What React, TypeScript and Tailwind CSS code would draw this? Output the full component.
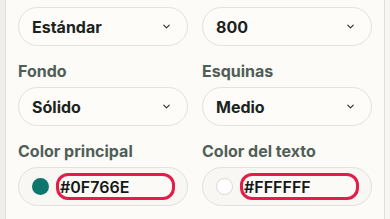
import { ChevronDown } from 'lucide-react';

type SelectProps = { value: string };

function PillSelect({ value }: SelectProps) {
  return (
    <div className="h-[39px] rounded-full border border-[#e4e1d9] bg-[#fdfcf9] pl-[13px] pr-[15px] flex items-center justify-between">
      <span className="text-[16px] font-bold text-[#1b2320]">{value}</span>
      <ChevronDown className="w-[11px] h-[11px] text-[#2a302d]" strokeWidth={2.5} />
    </div>
  );
}

function ColorField({ swatch, value, light }: { swatch: string; value: string; light?: boolean }) {
  return (
    <div className="h-[39px] rounded-full border border-[#e4e1d9] bg-[#f8f7f3] pl-[13px] pr-[10px] flex items-center gap-[7px]">
      <span
        className={`w-[17px] h-[17px] rounded-full shrink-0 ${light ? 'border border-[#d9d7d1]' : ''}`}
        style={{ backgroundColor: swatch }}
      />
      <div className="w-[119px] h-[27px] rounded-[12px] border-[3px] border-[#e11d48] bg-[#fbfaf7] flex items-center pl-[1px]">
        <span className="text-[16px] font-semibold text-[#141816] leading-none">{value}</span>
      </div>
    </div>
  );
}

function Field({ label, children }: { label: string; children: React.ReactNode }) {
  return (
    <div>
      <div className="text-[16px] leading-[22px] font-bold text-[#505e58] mb-[5px]">{label}</div>
      {children}
    </div>
  );
}

export default function App() {
  return (
    <div className="w-[390px] h-[219px] overflow-hidden flex font-['Inter',sans-serif]">
      <div className="w-[6px] bg-[#eeefeb] border-r border-[#e1dfd8] shrink-0" />
      <div className="flex-1 bg-[#fcfbf7] pl-3 pr-3 pt-[7px]">
        <div className="grid grid-cols-2 gap-x-[14px] gap-y-[14px]">
          <PillSelect value="Estándar" />
          <PillSelect value="800" />

          <Field label="Fondo">
            <PillSelect value="Sólido" />
          </Field>
          <Field label="Esquinas">
            <PillSelect value="Medio" />
          </Field>

          <Field label="Color principal">
            <ColorField swatch="#0F766E" value="#0F766E" />
          </Field>
          <Field label="Color del texto">
            <ColorField swatch="#FFFFFF" value="#FFFFFF" light />
          </Field>
        </div>
      </div>
      <div className="w-[6px] bg-[#f7f6f2] border-l border-[#e1dfd8] shrink-0" />
    </div>
  );
}
